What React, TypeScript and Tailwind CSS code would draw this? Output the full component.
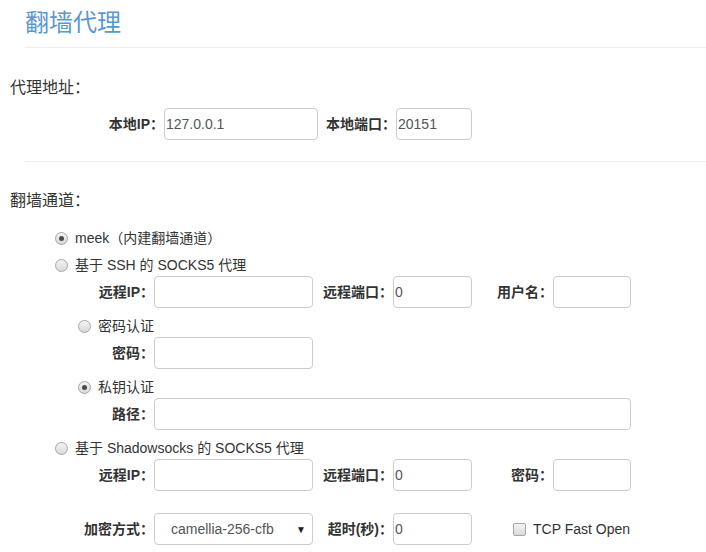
import * as React from 'react';

const font = { fontFamily: '"Liberation Sans", Arial, "Noto Sans CJK SC", sans-serif' };

function Radio({ checked }: { checked?: boolean }) {
	return (
		<span className="inline-flex w-[13px] h-[13px] shrink-0 items-center justify-center rounded-full border border-[#a6a6a6] bg-gradient-to-b from-[#f4f4f4] to-[#d8d8d8]">
			{checked && <span className="block w-[5px] h-[5px] rounded-full bg-[#4a4a4a]" />}
		</span>
	);
}

function RadioLine({ checked, indent, children }: { checked?: boolean; indent: string; children: React.ReactNode }) {
	return (
		<div className={`flex items-center h-[20px] ${indent}`}>
			<Radio checked={checked} />
			<span className="ml-[7px] text-[14px] leading-[20px] text-[#333]">{children}</span>
		</div>
	);
}

// label box runs right up to its input; the full-width colon sits just before it
function Label({ width, children }: { width: string; children: React.ReactNode }) {
	return (
		<label className={`${width} shrink-0 text-right text-[14px] font-bold leading-[32px] text-[#333]`}>{children}</label>
	);
}

function TextBox({ width, value }: { width: string; value?: string }) {
	return (
		<input
			type="text"
			defaultValue={value}
			className={`${width} h-[32px] shrink-0 rounded-[4px] border border-[#ccc] bg-white px-[1px] text-[14px] text-[#555] outline-none`}
			style={font}
		/>
	);
}

export default function App() {
	return (
		<div className="w-[706px] h-[552px] overflow-hidden bg-white text-[#333]" style={font}>
			<div className="ml-[25px] h-[48px] flex items-center border-b border-[#eee]">
				<h1 className="text-[24px] font-normal leading-[30px] text-[#5699d6] pb-[1px]">翻墙代理</h1>
			</div>

			<div className="mt-[30px] ml-[10px] h-[20px] text-[16px] leading-[20px]">代理地址：</div>
			<div className="mt-[10px] flex">
				<Label width="w-[164px]">本地IP：</Label>
				<TextBox width="w-[154px]" value="127.0.0.1" />
				<Label width="w-[78px]">本地端口：</Label>
				<TextBox width="w-[76px]" value="20151" />
			</div>

			<div className="mt-[21px] ml-[25px] border-t border-[#eee]" />

			<div className="mt-[29px] ml-[10px] h-[20px] text-[16px] leading-[20px]">翻墙通道：</div>

			<div className="mt-[17px]">
				<RadioLine checked indent="ml-[55px]">meek（内建翻墙通道）</RadioLine>
			</div>
			<div className="mt-[7px]">
				<RadioLine indent="ml-[55px]">基于 SSH 的 SOCKS5 代理</RadioLine>
			</div>
			<div className="mt-[1px] flex">
				<Label width="w-[154px]">远程IP：</Label>
				<TextBox width="w-[159px]" />
				<Label width="w-[80px]">远程端口：</Label>
				<TextBox width="w-[79px]" value="0" />
				<Label width="w-[81px]">用户名：</Label>
				<TextBox width="w-[78px]" />
			</div>
			<div className="mt-[8px]">
				<RadioLine indent="ml-[78px]">密码认证</RadioLine>
			</div>
			<div className="mt-[1px] flex">
				<Label width="w-[154px]">密码：</Label>
				<TextBox width="w-[159px]" />
			</div>
			<div className="mt-[8px]">
				<RadioLine checked indent="ml-[78px]">私钥认证</RadioLine>
			</div>
			<div className="mt-[1px] flex">
				<Label width="w-[154px]">路径：</Label>
				<TextBox width="w-[477px]" />
			</div>

			<div className="mt-[8px]">
				<RadioLine indent="ml-[55px]">基于 Shadowsocks 的 SOCKS5 代理</RadioLine>
			</div>
			<div className="mt-[1px] flex">
				<Label width="w-[154px]">远程IP：</Label>
				<TextBox width="w-[159px]" />
				<Label width="w-[80px]">远程端口：</Label>
				<TextBox width="w-[79px]" value="0" />
				<Label width="w-[81px]">密码：</Label>
				<TextBox width="w-[78px]" />
			</div>
			<div className="mt-[22px] flex items-center">
				<Label width="w-[154px]">加密方式：</Label>
				<div className="flex h-[32px] w-[159px] shrink-0 items-center justify-between rounded-[4px] border border-[#ccc] bg-white pl-[16px] pr-[6px] text-[14px] text-[#555]">
					<span>camellia-256-cfb</span>
					<span className="text-[10px] text-[#222]">▼</span>
				</div>
				<Label width="w-[80px]">超时(秒)：</Label>
				<TextBox width="w-[79px]" value="0" />
				<div className="ml-[41px] flex items-center">
					<span className="block w-[13px] h-[13px] rounded-[2px] border border-[#a6a6a6] bg-gradient-to-b from-[#f4f4f4] to-[#d8d8d8]" />
					<span className="ml-[7px] text-[14px] text-[#333]">TCP Fast Open</span>
				</div>
			</div>
		</div>
	);
}
